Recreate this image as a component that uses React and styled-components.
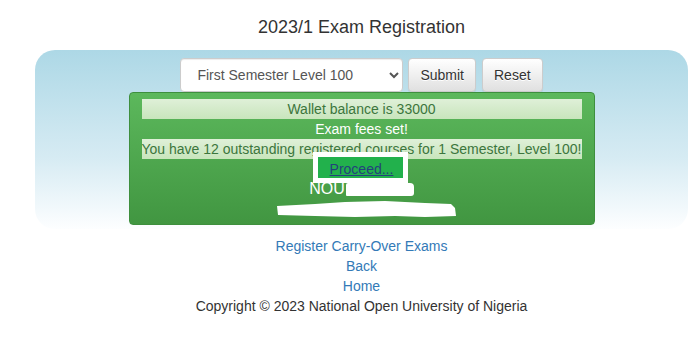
import styled, { createGlobalStyle } from "styled-components";

const GlobalStyle = createGlobalStyle`
  html, body {
    margin: 0;
    padding: 0;
    background: #fff;
  }
  body {
    font-family: "Liberation Sans", Arial, sans-serif;
    font-size: 14px;
    line-height: 20px;
    color: #333;
  }
  * {
    box-sizing: border-box;
  }
`;

const Page = styled.div`
  width: 688px;
  padding: 17px 0 0 35px;
  display: flex;
  flex-direction: column;
  align-items: center;
`;

const Title = styled.h3`
  margin: 0 0 13px;
  font-size: 18px;
  line-height: 20px;
  font-weight: normal;
  color: #333;
`;

const Panel = styled.div`
  width: 100%;
  border-radius: 20px;
  background: linear-gradient(to bottom, #add8e6 0%, #d6ebf3 60%, #fdfeff 100%);
  padding: 8px 0 4px;
  display: flex;
  flex-direction: column;
  align-items: center;
`;

const FormRow = styled.form`
  display: flex;
  align-items: center;
  margin: 0;
`;

const Select = styled.select`
  width: 223px;
  height: 34px;
  padding: 6px 12px;
  font-family: inherit;
  font-size: 14px;
  color: #555;
  background: #fff;
  border: 1px solid #ccc;
  border-radius: 4px;
  box-shadow: inset 0 1px 1px rgba(0, 0, 0, 0.075);
  margin-right: 5px;
`;

const Button = styled.button`
  height: 34px;
  padding: 6px 11px;
  margin-right: ${(p) => p.$gap || 0}px;
  font-family: inherit;
  font-size: 14px;
  color: #333;
  text-shadow: 0 1px 0 #fff;
  background: linear-gradient(to bottom, #fff 0%, #e0e0e0 100%);
  border: 1px solid #ccc;
  border-radius: 4px;
  box-shadow: inset 0 1px 0 rgba(255, 255, 255, 0.15), 0 1px 1px rgba(0, 0, 0, 0.075);
`;

const Alert = styled.div`
  position: relative;
  z-index: 0;
  width: 466px;
  padding: 6px 12px 5px;
  border: 1px solid #3e8f3e;
  border-radius: 4px;
  background: linear-gradient(to bottom, #5cb85c 0%, #419641 100%);
  color: #fff;
  text-align: center;
`;

const Line = styled.div`
  height: 20px;
  line-height: 20px;
  font-size: ${(p) => p.$size || 14}px;
  white-space: nowrap;
  color: ${(p) => (p.$light ? "#3c763d" : "#fff")};
  background: ${(p) =>
    p.$light ? "linear-gradient(to bottom, #dff0d8 0%, #c8e5bc 100%)" : "none"};
`;

const ProceedLink = styled.a`
  position: relative;
  z-index: 1;
  display: inline-block;
  color: #23427c;
  text-decoration: underline;
  cursor: pointer;

  &::before {
    content: "";
    position: absolute;
    z-index: -1;
    top: -7px;
    bottom: -4px;
    left: -17px;
    right: -15px;
    border: 5px solid #fff;
    background: #22b14c;
  }
`;

const Blob = styled.span`
  display: inline-block;
  width: 68px;
  height: 13px;
  margin-left: 1px;
  vertical-align: -2px;
  background: #fff;
  border-radius: 2px 4px 3px 1px;
`;

const Scribble = styled.svg`
  display: block;
  margin: 0 auto;
  position: relative;
  left: 4px;
`;

const Links = styled.div`
  margin-top: 7px;
  text-align: center;
`;

const NavLink = styled.a`
  display: block;
  color: #337ab7;
  text-decoration: none;
  line-height: 20px;
`;

const Footer = styled.div`
  line-height: 20px;
  color: #333;
  text-align: center;
`;

export default function App() {
  return (
    <>
      <GlobalStyle />
      <Page>
        <Title>2023/1 Exam Registration</Title>
        <Panel>
          <FormRow onSubmit={(e) => e.preventDefault()}>
            <Select defaultValue="1-100">
              <option value="1-100">First Semester Level 100</option>
            </Select>
            <Button type="submit" $gap={6}>Submit</Button>
            <Button type="reset">Reset</Button>
          </FormRow>
          <Alert>
            <Line $light>Wallet balance is 33000</Line>
            <Line>Exam fees set!</Line>
            <Line $light>You have 12 outstanding registered courses for 1 Semester, Level 100!</Line>
            <Line>
              <ProceedLink>Proceed...</ProceedLink>
            </Line>
            <Line $size={16}>
              NOU<Blob />
            </Line>
            <Line>
              <Scribble width="182" height="20" viewBox="0 0 182 20">
                <path
                  d="M2 7 L40 5 L70 3 L110 2 L150 4 L176 5 L180 9 L181 17 L150 18 L120 17 L80 18 L40 17 L3 16 Z"
                  fill="#fff"
                />
              </Scribble>
            </Line>
          </Alert>
        </Panel>
        <Links>
          <NavLink href="#">Register Carry-Over Exams</NavLink>
          <NavLink href="#">Back</NavLink>
          <NavLink href="#">Home</NavLink>
          <Footer>Copyright © 2023 National Open University of Nigeria</Footer>
        </Links>
      </Page>
    </>
  );
}
